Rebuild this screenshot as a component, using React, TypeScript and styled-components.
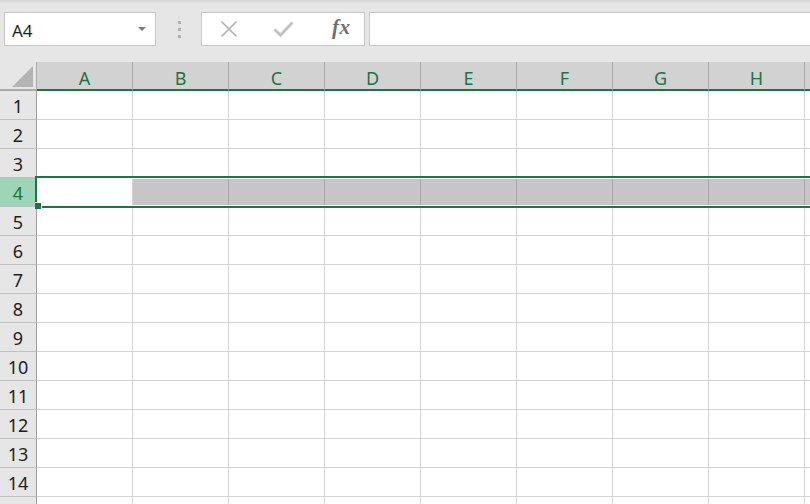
import React from 'react';
import styled, { createGlobalStyle } from 'styled-components';

const GlobalStyle = createGlobalStyle`
  html, body {
    margin: 0;
    padding: 0;
    overflow: hidden;
    background: #ffffff;
  }
  body {
    font-family: "Noto Sans", "Open Sans", Arial, sans-serif;
  }
`;

const green = '#217346';
// the ninth column only peeks in at the right edge, so its letter is off-screen
const columns = ['A', 'B', 'C', 'D', 'E', 'F', 'G', 'H', ''];
const rows = Array.from({ length: 15 }, (_, i) => i + 1);
const visibleRows = 14;
const activeRow = 4;

const Shell = styled.div`
  position: relative;
  width: 810px;
  height: 504px;
  overflow: hidden;
  background: #ffffff;
`;

const Toolbar = styled.div`
  height: 62px;
  box-sizing: border-box;
  padding: 12px 0 0 4px;
  display: flex;
  align-items: flex-start;
  background: linear-gradient(#d6d6d6 0px, #e6e6e6 4px, #e6e6e6 100%);
`;

const NameBox = styled.div`
  width: 152px;
  height: 34px;
  box-sizing: border-box;
  border: 1px solid #c6c6c6;
  background: #ffffff;
  display: flex;
  align-items: center;
  padding: 2px 9px 0 7px;
  font-size: 17px;
  color: #1e1e1e;
`;

const NameText = styled.span`
  flex: 1;
`;

const Caret = styled.span`
  width: 0;
  height: 0;
  border-left: 4px solid transparent;
  border-right: 4px solid transparent;
  border-top: 4px solid #7a7a7a;
  margin-top: -2px;
`;

const Grip = styled.div`
  width: 45px;
  height: 34px;
  display: flex;
  flex-direction: column;
  align-items: center;
  justify-content: center;
  gap: 4px;
  padding-left: 1px;
  box-sizing: border-box;
`;

const GripDot = styled.span`
  width: 3px;
  height: 3px;
  background: #b2b2b2;
`;

const FormulaButtons = styled.div`
  width: 164px;
  height: 34px;
  box-sizing: border-box;
  border: 1px solid #c6c6c6;
  background: #ffffff;
  display: flex;
  align-items: center;
  padding-left: 18px;
`;

const IconSlot = styled.span<{ $w: number }>`
  width: ${(p) => p.$w}px;
  display: flex;
  align-items: center;
`;

const Fx = styled.span`
  font-family: "Liberation Serif", "DejaVu Serif", serif;
  font-style: italic;
  font-weight: 700;
  font-size: 21px;
  color: #707070;
  letter-spacing: 0.5px;
  margin: -3px 0 0 4px;
`;

const FormulaInput = styled.div`
  flex: 1;
  height: 34px;
  margin-left: 4px;
  margin-right: -4px;
  box-sizing: border-box;
  border: 1px solid #c6c6c6;
  background: #ffffff;
`;

const Sheet = styled.div`
  position: relative;
  display: grid;
  grid-template-columns: 37px repeat(${columns.length}, 96px);
  grid-template-rows: 29px;
  grid-auto-rows: 29px;
`;

const Corner = styled.div`
  position: relative;
  box-sizing: border-box;
  background: #e6e6e6;
  border-right: 1px solid #ababab;
  border-bottom: 2px solid #ababab;
`;

const CornerTriangle = styled.span`
  position: absolute;
  left: 12px;
  top: 4px;
  width: 0;
  height: 0;
  border-left: 21px solid transparent;
  border-bottom: 21px solid #b4b4b4;
`;

const ColHeader = styled.div`
  box-sizing: border-box;
  background: #d2d2d2;
  border-right: 1px solid #ababab;
  border-bottom: 2px solid ${green};
  color: ${green};
  font-size: 18px;
  display: flex;
  align-items: center;
  justify-content: center;
  padding-top: 4px;
`;

const RowHeader = styled.div<{ $active: boolean }>`
  box-sizing: border-box;
  background: ${(p) => (p.$active ? '#9fd5b7' : '#e6e6e6')};
  color: ${(p) => (p.$active ? green : '#1e1e1e')};
  border-right: 1px solid #9f9f9f;
  border-bottom: 1px solid #c0c0c0;
  font-size: 18px;
  display: flex;
  align-items: center;
  justify-content: center;
  padding-top: 1px;
`;

const Cell = styled.div<{ $selected: boolean }>`
  box-sizing: border-box;
  background: ${(p) => (p.$selected ? '#c6c6c6' : '#ffffff')};
  border-right: 1px solid ${(p) => (p.$selected ? '#a9a9a9' : '#d4d4d4')};
  border-bottom: 1px solid #d4d4d4;
`;

const Selection = styled.div<{ $top: number }>`
  position: absolute;
  left: 35px;
  right: -10px;
  top: ${(p) => p.$top}px;
  height: 32px;
  box-sizing: border-box;
  border: 2px solid ${green};
  box-shadow: inset 0 0 0 1px #ffffff;
  pointer-events: none;
`;

const FillHandle = styled.div<{ $top: number }>`
  position: absolute;
  left: 35px;
  top: ${(p) => p.$top}px;
  width: 6px;
  height: 6px;
  background: ${green};
  border-right: 1px solid #ffffff;
  border-top: 1px solid #ffffff;
`;

const CrossIcon = () => (
  <svg width="18" height="18" viewBox="0 0 18 18">
    <path d="M1.5 1.5 L16.5 16.5 M16.5 1.5 L1.5 16.5" stroke="#b0b0b0" strokeWidth="1.6" fill="none" />
  </svg>
);

const CheckIcon = () => (
  <svg width="21" height="16" viewBox="0 0 21 16">
    <path d="M1.5 8.5 L7.5 14 L19.5 1.5" stroke="#c2c2c2" strokeWidth="3" fill="none" />
  </svg>
);

export default function App() {
  // row 4 sits below the 29px header plus three 29px rows
  const rowTop = 29 + (activeRow - 1) * 29;

  return (
    <Shell>
      <GlobalStyle />
      <Toolbar>
        <NameBox>
          <NameText>A4</NameText>
          <Caret />
        </NameBox>
        <Grip>
          <GripDot />
          <GripDot />
          <GripDot />
        </Grip>
        <FormulaButtons>
          <IconSlot $w={53}>
            <CrossIcon />
          </IconSlot>
          <IconSlot $w={55}>
            <CheckIcon />
          </IconSlot>
          <IconSlot $w={30}>
            <Fx>fx</Fx>
          </IconSlot>
        </FormulaButtons>
        <FormulaInput />
      </Toolbar>
      <Sheet>
        <Corner>
          <CornerTriangle />
        </Corner>
        {columns.map((c, i) => (
          <ColHeader key={i}>{c}</ColHeader>
        ))}
        {rows.map((r) => (
          <React.Fragment key={r}>
            <RowHeader $active={r === activeRow}>{r <= visibleRows ? r : ''}</RowHeader>
            {columns.map((c, i) => (
              <Cell key={i} $selected={r === activeRow && i > 0} />
            ))}
          </React.Fragment>
        ))}
        <Selection $top={rowTop - 2} />
        <FillHandle $top={rowTop + 24} />
      </Sheet>
    </Shell>
  );
}
